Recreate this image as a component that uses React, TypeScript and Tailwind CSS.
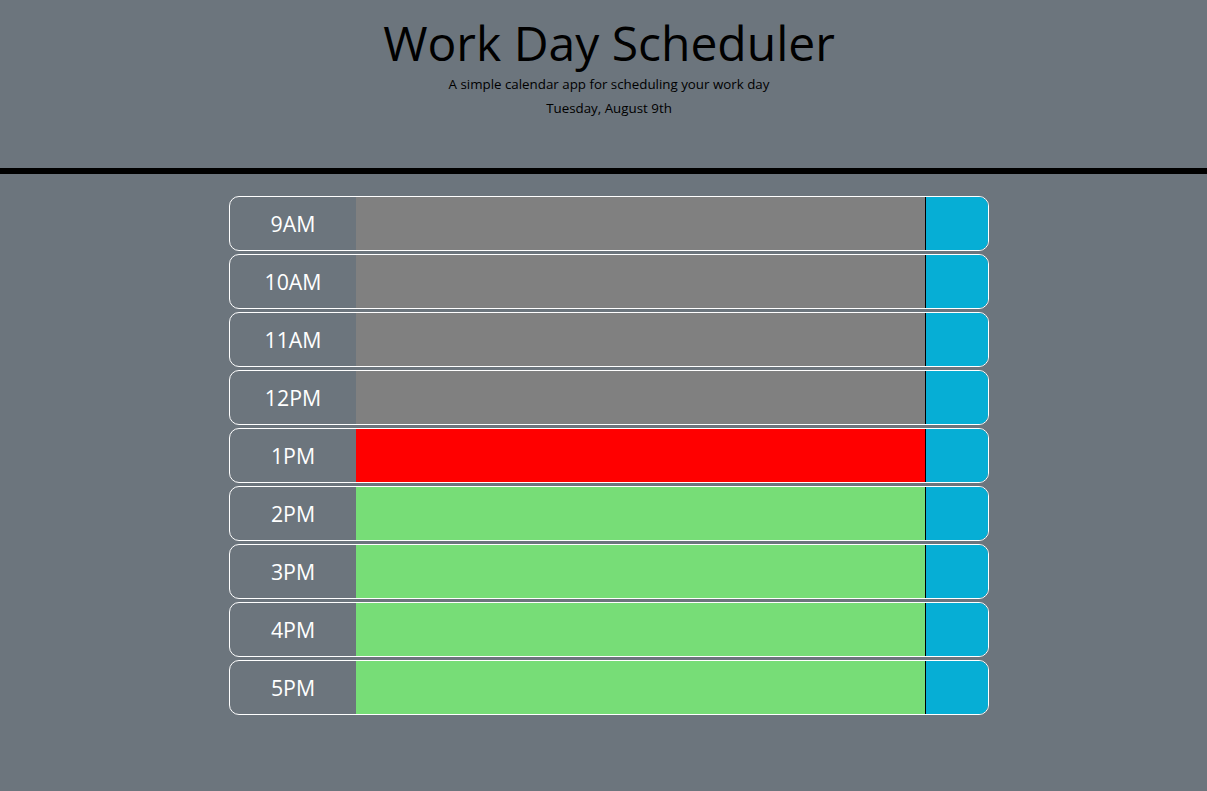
import React from "react";

const hours = [
  { label: "9AM", state: "past" },
  { label: "10AM", state: "past" },
  { label: "11AM", state: "past" },
  { label: "12PM", state: "past" },
  { label: "1PM", state: "present" },
  { label: "2PM", state: "future" },
  { label: "3PM", state: "future" },
  { label: "4PM", state: "future" },
  { label: "5PM", state: "future" },
];

const blockColor: Record<string, string> = {
  past: "bg-[#808080]",
  present: "bg-[#ff0000]",
  future: "bg-[#77dd77]",
};

function TimeBlock({ label, state }: { label: string; state: string }) {
  return (
    <div className="flex h-[55px] w-[760px] overflow-hidden rounded-[10px] border border-white">
      <div className="flex w-[126px] shrink-0 items-center justify-center text-[21.33px] text-white">
        {label}
      </div>
      <textarea
        className={`flex-1 resize-none border-r border-black outline-none ${blockColor[state]}`}
      />
      <button className="w-[62px] shrink-0 bg-[#06aed5]" aria-label="save" />
    </div>
  );
}

export default function App() {
  return (
    <div
      className="min-h-screen bg-[#6c757d] text-black"
      style={{ fontFamily: '"Open Sans", "Liberation Sans", sans-serif' }}
    >
      <header className="h-[174px] border-b-[6px] border-black">
        <div className="flex flex-col items-center pl-[11px] pt-[19px]">
          <h1 className="text-[48px] leading-[48px] font-normal">Work Day Scheduler</h1>
          <p className="mt-[7px] text-[13.33px] leading-[20px]">
            A simple calendar app for scheduling your work day
          </p>
          <p className="mt-[4px] text-[13.33px] leading-[20px]">Tuesday, August 9th</p>
        </div>
      </header>
      <main className="flex flex-col items-center gap-[3px] pl-[11px] pt-[22px]">
        {hours.map((h) => (
          <TimeBlock key={h.label} label={h.label} state={h.state} />
        ))}
      </main>
    </div>
  );
}
